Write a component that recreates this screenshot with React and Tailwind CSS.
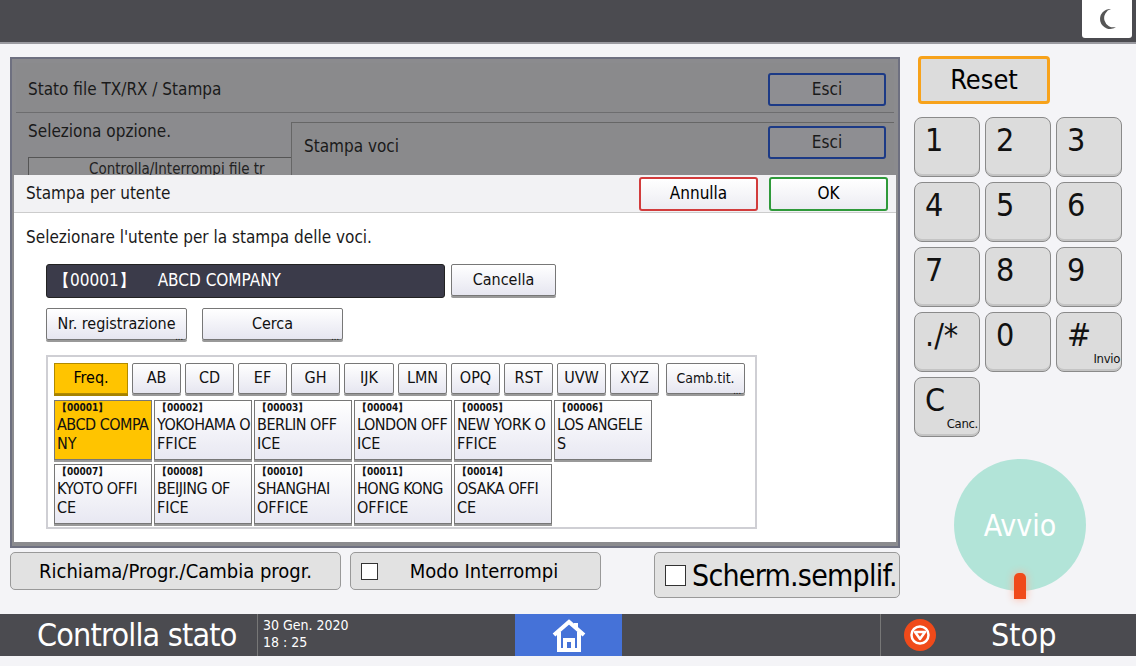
import React from "react";

const FONT = { fontFamily: '"DejaVu Sans Condensed","DejaVu Sans","Liberation Sans",sans-serif', fontStretch: "condensed" };

const TABS = [
  ["AB", "w-[49px]"], ["CD", "w-[49px]"], ["EF", "w-[49px]"], ["GH", "w-[49px]"], ["IJK", "w-[50px]"],
  ["LMN", "w-[49px]"], ["OPQ", "w-[49px]"], ["RST", "w-[49px]"], ["UVW", "w-[49px]"], ["XYZ", "w-[49px]"],
];

const USERS = [
  ["00001", "ABCD COMPA", "NY", true],
  ["00002", "YOKOHAMA O", "FFICE"],
  ["00003", "BERLIN OFF", "ICE"],
  ["00004", "LONDON OFF", "ICE"],
  ["00005", "NEW YORK O", "FFICE"],
  ["00006", "LOS ANGELE", "S"],
  ["00007", "KYOTO OFFI", "CE"],
  ["00008", "BEIJING OF", "FICE"],
  ["00010", "SHANGHAI", "OFFICE"],
  ["00011", "HONG KONG", "OFFICE"],
  ["00014", "OSAKA OFFI", "CE"],
];

function Key({ label, sub }) {
  return (
    <div className="relative w-[66px] h-[60px] rounded-lg border border-[#8a8a8a] bg-[#dcdcdc] shadow-[inset_0_-2px_0_#c4c4c4]">
      <span className="absolute left-[10px] top-[2px] text-[32px] leading-[40px] text-[#111]">{label}</span>
      {sub && <span className="absolute right-[1px] bottom-[3px] text-[13px] text-[#111] tracking-tight">{sub}</span>}
    </div>
  );
}

function Btn({ children, cls = "", dots }) {
  return (
    <div className={`relative flex items-center justify-center bg-gradient-to-b from-white to-[#e6e6f0] border border-[#777] rounded-[2px] shadow-[0_2px_0_#999] text-[16px] text-[#111] whitespace-nowrap ${cls}`}>
      {children}
      {dots && <span className="absolute right-[3px] bottom-[-3px] text-[9px] leading-[10px]">...</span>}
    </div>
  );
}

export default function App() {
  return (
    <div style={FONT} className="w-[1136px] h-[666px] bg-[#f4f4f7] flex flex-col overflow-hidden">
      {/* top bar */}
      <div className="h-[44px] bg-[#4b4b50] flex justify-end pr-[4px] border-b-2 border-[#9a9aa0]">
        <div className="w-[50px] h-[38px] bg-white rounded-b-[3px] flex items-center justify-center">
          <svg width="22" height="24" viewBox="0 0 22 24"><path d="M15 2 A10 10 0 1 0 20 20 A9 9 0 0 1 15 2Z" fill="#555" /></svg>
        </div>
      </div>

      <div className="flex flex-1">
        {/* left */}
        <div className="w-[902px] pl-[10px] pt-[13px]">
          <div className="w-[890px] h-[491px] border-2 border-[#6e7080] bg-[#8b8b8e] p-[4px] flex flex-col">
            <div className="h-[50px] bg-[#8a8a8c] border-b border-[#6d6d6f] flex items-center justify-between pl-[12px] pr-[8px] pt-[4px]">
              <span className="text-[17px] text-[#1a1a1a]">Stato file TX/RX / Stampa</span>
              <div className="w-[118px] h-[33px] border-2 border-[#1c3a86] rounded-[3px] bg-[#8e8e92] flex items-center justify-center text-[17px] text-[#1a1a1a]">Esci</div>
            </div>
            <div className="h-[62px] flex overflow-hidden">
              <div className="w-[275px] pl-[12px] pt-[6px] flex flex-col gap-[12px]">
                <span className="text-[17px] text-[#1a1a1a]">Seleziona opzione.</span>
                <div className="w-[300px] h-[30px] border border-[#555] bg-[#8e8e90] text-[15px] text-[#222] pl-[60px] whitespace-nowrap">Controlla/Interrompi file tr</div>
              </div>
              <div className="flex-1 mt-[9px] border-l border-t border-[#666] bg-[#8a8a8c] flex items-start justify-between pl-[12px] pr-[8px] pt-[3px]">
                <span className="text-[17px] text-[#1a1a1a] mt-[8px]">Stampa voci</span>
                <div className="w-[118px] h-[33px] border-2 border-[#1c3a86] rounded-[3px] bg-[#8e8e92] flex items-center justify-center text-[17px] text-[#1a1a1a]">Esci</div>
              </div>
            </div>
            {/* dialog */}
            <div className="flex-1 bg-white flex flex-col -mx-[2px]">
              <div className="h-[38px] bg-[#f2f2f4] border-b border-[#ccc] flex items-center justify-between pl-[12px] pr-[8px]">
                <span className="text-[17px] text-[#1a1a1a]">Stampa per utente</span>
                <div className="flex gap-[11px]">
                  <div className="w-[119px] h-[34px] border-2 border-[#d23c3c] rounded-[3px] bg-gradient-to-b from-white to-[#ececf2] flex items-center justify-center text-[17px]">Annulla</div>
                  <div className="w-[119px] h-[34px] border-2 border-[#2f9a3a] rounded-[3px] bg-gradient-to-b from-white to-[#ececf2] flex items-center justify-center text-[17px]">OK</div>
                </div>
              </div>
              <div className="pl-[12px] pt-[12px] text-[17px] text-[#1a1a1a]">Selezionare l'utente per la stampa delle voci.</div>
              <div className="pl-[32px] pt-[13px] flex gap-[6px]">
                <div className="w-[399px] h-[34px] bg-[#3b3b4a] rounded-[3px] border border-[#222] flex items-center pl-[6px] text-[17px] text-white gap-[22px]">
                  <span>【00001】</span><span>ABCD COMPANY</span>
                </div>
                <Btn cls="w-[105px] h-[32px]">Cancella</Btn>
              </div>
              <div className="pl-[32px] pt-[10px] flex gap-[15px]">
                <Btn cls="w-[141px] h-[32px]" dots>Nr. registrazione</Btn>
                <Btn cls="w-[141px] h-[32px]" dots>Cerca</Btn>
              </div>
              <div className="ml-[32px] mt-[15px] w-[711px] h-[174px] border-2 border-[#cfcfd4] p-[6px] flex flex-col gap-[4px]">
                <div className="flex gap-[4px] items-center">
                  <div className="w-[74px] h-[31px] bg-[#ffc400] border border-[#b08a00] shadow-[0_2px_0_#a68200] flex items-center justify-center text-[16px]">Freq.</div>
                  {TABS.map(([t, w]) => <Btn key={t} cls={`${w} h-[31px]`}>{t}</Btn>)}
                  <Btn cls="ml-[3px] w-[79px] h-[31px] !text-[14px]" dots>Camb.tit.</Btn>
                </div>
                <div className="grid grid-cols-[repeat(6,98px)] gap-x-[2px] gap-y-[4px] mt-[2px]">
                  {USERS.map(([n, a, b, sel]) => (
                    <div key={n} className={`h-[60px] border border-[#777] shadow-[0_2px_0_#999] pl-[2px] leading-[19px] text-[#111] overflow-hidden ${sel ? "bg-[#ffc400]" : "bg-gradient-to-b from-white to-[#e8e8f2]"}`}>
                      <div className="text-[10px] leading-[14px] font-bold">【{n}】</div>
                      <div className="text-[16px] whitespace-nowrap tracking-[-0.5px]">{a}</div>
                      <div className="text-[16px]">{b}</div>
                    </div>
                  ))}
                </div>
              </div>
            </div>
          </div>
          {/* bottom buttons */}
          <div className="flex items-start mt-[4px]">
            <div className="w-[331px] h-[38px] rounded-[5px] border border-[#999] bg-[#e2e2e2] flex items-center justify-center text-[20px]">Richiama/Progr./Cambia progr.</div>
            <div className="ml-[9px] w-[251px] h-[38px] rounded-[5px] border border-[#999] bg-[#e2e2e2] flex items-center px-[10px] text-[20px]">
              <span className="w-[17px] h-[17px] border border-[#333] bg-white" />
              <span className="flex-1 text-center">Modo Interrompi</span>
            </div>
            <div className="ml-[53px] w-[246px] h-[46px] rounded-[5px] border border-[#999] bg-[#e2e2e2] flex items-center pl-[10px] gap-[6px] text-[30px] tracking-tight whitespace-nowrap">
              <span className="w-[21px] h-[21px] border border-[#333] bg-white shrink-0" />
              <span>Scherm.semplif.</span>
            </div>
          </div>
        </div>

        {/* right keypad */}
        <div className="flex-1 pl-[12px] pt-[12px] flex flex-col">
          <div className="ml-[4px] w-[132px] h-[48px] rounded-[4px] border-[3px] border-[#f7a21b] bg-[#dcdcdc] flex items-center justify-center text-[27px]">Reset</div>
          <div className="mt-[13px] grid grid-cols-[repeat(3,66px)] gap-x-[5px] gap-y-[5px]">
            {["1","2","3","4","5","6","7","8","9"].map(k => <Key key={k} label={k} />)}
            <Key label="./*" />
            <Key label="0" />
            <Key label="#" sub="Invio" />
            <Key label="C" sub="Canc." />
          </div>
          <div className="relative ml-[40px] mt-[22px] w-[132px] h-[132px] rounded-full bg-[#b2e4d8] flex items-center justify-center">
            <span className="text-[30px] text-white">Avvio</span>
            <div className="absolute bottom-[-8px] left-[60px] w-[12px] h-[26px] rounded-t-[5px] bg-[#f04a1a] shadow-[0_0_8px_#ffb099]" />
          </div>
        </div>
      </div>

      {/* bottom bar */}
      <div className="h-[42px] bg-[#4b4b50] flex items-center text-white mb-[10px]">
        <div className="w-[257px] pl-[37px] text-[32px] tracking-tight whitespace-nowrap">Controlla stato</div>
        <div className="w-[258px] h-full border-l border-[#777] pl-[5px] text-[14px] leading-[17px] pt-[3px]">
          <div>30 Gen. 2020</div><div>18 : 25</div>
        </div>
        <div className="w-[107px] h-full bg-[#4572d8] flex items-center justify-center">
          <svg width="36" height="34" viewBox="0 0 36 34"><path d="M3 17 L18 4 L33 17 M8 14 V32 H28 V14 M14 32 V22 H22 V32 M25 5 V11" stroke="white" strokeWidth="4" fill="none" /></svg>
        </div>
        <div className="w-[258px] h-full" />
        <div className="flex-1 h-full border-l border-[#777] flex items-center">
          <div className="ml-[23px] w-[32px] h-[32px] rounded-full bg-[#f04a1a] flex items-center justify-center">
            <svg width="22" height="22" viewBox="0 0 22 22"><circle cx="11" cy="11" r="8.5" fill="none" stroke="white" strokeWidth="2.5"/><path d="M6 8 H16 L11 15Z" fill="none" stroke="white" strokeWidth="2.5" strokeLinejoin="round"/></svg>
          </div>
          <span className="ml-[55px] text-[32px]">Stop</span>
        </div>
      </div>
    </div>
  );
}
